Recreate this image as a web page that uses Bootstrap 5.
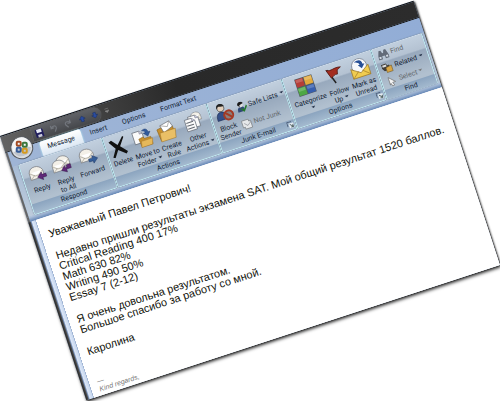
<!DOCTYPE html>
<html lang="ru">
<head>
<meta charset="utf-8">
<meta name="viewport" content="width=device-width, initial-scale=1">
<title>Message</title>
<link rel="stylesheet" href="https://cdn.jsdelivr.net/npm/bootstrap@5.3.0/dist/css/bootstrap.min.css">
<style>
body{background:#fff;overflow:hidden;font-family:Roboto,"Open Sans",sans-serif;font-size:7px;line-height:8px;color:#0f1a30}
.mail-window{width:87%;margin:136px 0 0 0;transform:rotate(-18.1deg);transform-origin:0 0;background:#93add2;border-top:1px solid #111;box-shadow:1px 1px 2px #222,0 3px 3px rgba(0,0,0,.5)}
button,.tab-link{border:0;background:none;padding:0;color:inherit;font:inherit;text-decoration:none}
.title-strip{height:17px;background:linear-gradient(90deg,#626262,#454545 20%,#292929 42%,#2c2c2c);border-bottom:1px solid #171717;padding-left:31px}
.quick-bar{height:14px;width:72px;background:linear-gradient(#606267,#45474b);border-radius:0 8px 8px 0;box-shadow:0 0 1px #999}
.quick-bar button,.more-btn{line-height:0}
.office-btn{left:5px;top:5px;line-height:0;z-index:2}
.tab-strip{height:15px;padding-left:33px;background:linear-gradient(90deg,#9fb5d6,#92add6)}
.tab-link{display:block;height:15px;line-height:15px;padding:0 7px}
.tab-link.active{background:linear-gradient(#fff,#dce8f4);border-radius:3px 3px 0 0;box-shadow:0 0 2px #b6fbff}
.tab-list{gap:2px}
.ribbon-bar{height:53px;padding:0 2px 0 6px;background:linear-gradient(#a8bcd5,#bccbdb)}
.left-edge{border-left:2px solid #666}
.tool-group{flex-basis:0;min-width:0;border:1px solid #bfeef3;border-top-color:#cfdbe8;box-shadow:0 0 1px #567;border-radius:2px;background:linear-gradient(#c1cfde 0,#b4c2d2 27%,#98a9bd 30%,#b1c0cf 76%)}
.g-respond{flex-grow:88}.g-actions{flex-grow:111}.g-junk{flex-grow:79}.g-options{flex-grow:94}.g-find{flex-grow:53}
.group-name{height:11px;line-height:10px;background:linear-gradient(#8ba4bf,#a4bacf)}
.launch{right:1px;top:1px;line-height:0}
.big-tool{white-space:nowrap}
.big-tool svg{display:block;width:20px;height:20px;margin:3px auto 2px}
.small-tool{height:14px;gap:2px;white-space:nowrap}
.small-tool svg{flex:none;width:11px;height:11px}
.safe-tools{padding-top:6px;gap:4px}
.dim{color:#606467}
.drop{display:inline-block;width:0;height:0;border:2px solid transparent;border-top-color:#26334a;border-bottom:0;vertical-align:2px;margin-left:2px}
.dim .drop{border-top-color:#777}
.under-strip{height:5px;background:linear-gradient(#b7c8df,#6284b4)}
.paper-row{background:linear-gradient(90deg,#222 0,#4a4a4a 2px,#7790b8 3px,#dbe6f7 4px,#c8d8ef 7px,#6f8bb8 8px,#fff 8px);padding-left:8px}
.paper{background:#fff;color:#10120a;font-family:"Liberation Sans",Arial,sans-serif;font-size:11px;line-height:11px;padding:12px 4px 2px 8px;white-space:nowrap}
.paper p{margin:0 0 12px}
.paper .sign-off{font:italic 7px/8px "Liberation Sans",sans-serif;color:#777;margin:22px 0 0}
</style>
<script src="https://cdn.jsdelivr.net/npm/bootstrap@5.3.0/dist/js/bootstrap.bundle.min.js"></script>
</head>
<body>
<svg class="d-none">
<defs>
<linearGradient id="gold" x2="0" y2="1"><stop stop-color="#f8dc91"/><stop offset="1" stop-color="#c98f28"/></linearGradient>
<linearGradient id="cream" x2="0" y2="1"><stop stop-color="#fff"/><stop offset="1" stop-color="#d8d3c5"/></linearGradient>
</defs>
<symbol id="letter" viewBox="0 0 16 14"><path d="M1 6C2 2 5 1 8 1s6 2 7 5v7H1z" fill="#f3f0e8" stroke="#777a80" stroke-width=".7"/><path d="M1 6l5 4h4l5-4M1 13l5-4M15 13l-5-4" fill="none" stroke="#a09b8d" stroke-width=".6"/><path d="M3 6h10l-3 3H6z" fill="#fff"/></symbol>
<symbol id="folder" viewBox="0 0 16 12"><path d="M1 2l5-1 1 2h7v8H2z" fill="#c7902d" stroke="#8d6420" stroke-width=".6"/><path d="M3 5h12.500l-2 6.500H1.500z" fill="#e5b85a" stroke="#a1752a" stroke-width=".5"/></symbol>
<symbol id="sheet" viewBox="0 0 12 14"><path d="M1 1h7l3 3v9H1z" fill="#fafafa" stroke="#656b76" stroke-width=".7"/><path d="M8 1v3h3" fill="#ccd" stroke="#778" stroke-width=".5"/></symbol>
</svg>

<main class="mail-window position-relative">
  <button class="office-btn position-absolute" type="button" aria-label="Office">
    <svg width="24" height="24" viewBox="0 0 24 24"><circle cx="12" cy="12" r="11" fill="#d9dce0" stroke="#55585d"/><circle cx="12" cy="11" r="9.500" fill="#f4f5f6"/><path d="M3 14c5-3 12-3 18 0a9.500 9.500 0 0 1-18 0" fill="#bfc4cb"/><g fill="none" stroke-width="2" transform="rotate(18 12 12)"><rect x="7" y="6" width="4" height="4" rx="1" stroke="#a34b23"/><rect x="13" y="7" width="4" height="4" rx="1" stroke="#3b763c"/><rect x="7" y="12" width="4" height="4" rx="1" stroke="#355b98"/><rect x="13" y="13" width="4" height="4" rx="1" stroke="#d59a20"/></g></svg>
  </button>
  <header class="title-strip d-flex align-items-center gap-1">
    <div class="quick-bar d-flex align-items-center justify-content-around">
      <button type="button" aria-label="Save"><svg width="9" height="9" viewBox="0 0 9 9"><path d="M.5.5h7l1 1v7h-8z" fill="#1f1d5d"/><path d="M2 .5h5v3.500H2z" fill="#e6eaf5"/><path d="M2.500 6h4v2.500h-4z" fill="#c8c9da"/></svg></button>
      <button type="button" aria-label="Undo"><svg width="9" height="9" viewBox="0 0 9 9"><path d="M2 1v3h3M2 4c2-3 6-2 5 1L5 8" fill="none" stroke="#72767d" stroke-width="1.200"/></svg></button>
      <button type="button" aria-label="Redo"><svg width="9" height="9" viewBox="0 0 9 9"><path d="M7 1v3H4M7 4C5 1 1 2 2 5l2 3" fill="none" stroke="#72767d" stroke-width="1.200"/></svg></button>
      <button type="button" aria-label="Previous"><svg width="7" height="7" viewBox="0 0 8 8"><path d="M4 .5l3.500 3.500h-2v3h-3V4h-2z" fill="#2a4ca0" stroke="#172c65" stroke-width=".5"/></svg></button>
      <button type="button" aria-label="Next"><svg width="7" height="7" viewBox="0 0 8 8"><path d="M4 7.500L.5 4h2V1h3v3h2z" fill="#2a4ca0" stroke="#172c65" stroke-width=".5"/></svg></button>
    </div>
    <button class="more-btn" type="button" aria-label="More"><svg width="5" height="6" viewBox="0 0 5 6"><path d="M.5 1h4M.5 3h4l-2 2z" fill="#888" stroke="#888" stroke-width=".5"/></svg></button>
  </header>
  <nav class="tab-strip left-edge d-flex">
    <div class="tab-list d-flex">
      <a class="tab-link active" href="#">Message</a>
      <a class="tab-link" href="#">Insert</a>
      <a class="tab-link" href="#">Options</a>
      <a class="tab-link" href="#">Format Text</a>
    </div>
  </nav>
  <div class="ribbon-bar left-edge d-flex">
    <section class="tool-group g-respond d-flex flex-column">
      <div class="flex-fill d-flex align-items-start justify-content-evenly">
        <button class="big-tool" type="button"><svg viewBox="0 0 20 20"><use href="#letter" x="1" y="2" width="16" height="14"/><path d="M9 14l5-4v2.500h4v3h-4V18z" fill="#5f2878" stroke="#39174c" stroke-width=".5"/></svg>Reply</button>
        <button class="big-tool" type="button"><svg viewBox="0 0 20 20"><use href="#letter" x="5" y="0" width="15" height="13"/><use href="#letter" x="0" y="3" width="15" height="13"/><path d="M9 15l4-4v2.500h2V11h4v4h-5v3z" fill="#5f2878" stroke="#39174c" stroke-width=".5"/></svg>Reply<br>to All</button>
        <button class="big-tool" type="button"><svg viewBox="0 0 20 20"><use href="#letter" x="1" y="1" width="16" height="14"/><path d="M19 14l-5-4v2.500h-4v3h4V18z" fill="#355e98" stroke="#203a6a" stroke-width=".5"/></svg>Forward</button>
      </div>
      <div class="group-name text-center">Respond</div>
    </section>
    <section class="tool-group g-actions d-flex flex-column">
      <div class="flex-fill d-flex align-items-start justify-content-evenly">
        <button class="big-tool" type="button"><svg viewBox="0 0 20 20"><path d="M2 3l3-1 5 6 7-7 1 1-6 8 6 7-2 2-7-6-5 7-2-1 5-8z" fill="#111"/></svg>Delete</button>
        <button class="big-tool" type="button"><svg viewBox="0 0 20 20"><use href="#sheet" x="0" y="0" width="12" height="15"/><use href="#folder" x="5" y="7" width="15" height="12"/><path d="M11 2c4-2 6 0 6 3h2l-3.500 4L12 5h2c0-2-1-2-3-3z" fill="#315b9d" stroke="#1a3568" stroke-width=".4"/></svg>Move to<br>Folder<span class="drop"></span></button>
        <button class="big-tool" type="button"><svg viewBox="0 0 20 20"><path d="M1 6l6-1 2 2h8v11H2z" fill="#c7902d" stroke="#8d6420" stroke-width=".6"/><path d="M5 3l10-2 2 6-10 4z" fill="#fff" stroke="#70747b" stroke-width=".7"/><path d="M5 3l7 3 3-5" fill="none" stroke="#888" stroke-width=".6"/><path d="M3 10h16l-2 9H2z" fill="#e9bf66" stroke="#a1752a" stroke-width=".5"/></svg>Create<br>Rule</button>
        <button class="big-tool" type="button"><svg viewBox="0 0 20 20"><use href="#letter" x="8" y="0" width="12" height="10"/><use href="#sheet" x="5" y="2" width="12" height="15"/><use href="#sheet" x="1" y="4" width="12" height="15"/><path d="M3 9h7M3 12h7M3 15h7" stroke="#656a72"/></svg>Other<br>Actions<span class="drop"></span></button>
      </div>
      <div class="group-name text-center">Actions</div>
    </section>
    <section class="tool-group g-junk d-flex flex-column">
      <div class="flex-fill d-flex align-items-start justify-content-evenly">
        <button class="big-tool" type="button"><svg viewBox="0 0 20 20"><path d="M2 17c0-6 2-8 5-8s5 2 5 8z" fill="#354f87" stroke="#1b2b54" stroke-width=".6"/><circle cx="8" cy="5" r="3.500" fill="#e3d0bd" stroke="#333" stroke-width=".6"/><path d="M4 5c0-6 7-5 8-1-3 0-5-1-6-1z" fill="#222"/><circle cx="14" cy="14" r="4.500" fill="#8b7f7d" stroke="#a43925" stroke-width="2"/><path d="M11 11l6 6" stroke="#a43925" stroke-width="2"/></svg>Block<br>Sender</button>
        <div class="safe-tools d-flex flex-column">
          <button class="small-tool d-flex align-items-center" type="button"><svg viewBox="0 0 11 11"><path d="M1 10c0-4 1-5 4-5s3 1 3 5z" fill="#304875"/><circle cx="5" cy="3" r="2.500" fill="#ddd"/><path d="M2 3c0-4 5-4 6-1L4 3v2z" fill="#181818"/><path d="M5 7l2 3 4-5" fill="none" stroke="#237a2a" stroke-width="1.500"/></svg><span>Safe Lists<span class="drop"></span></span></button>
          <button class="small-tool dim d-flex align-items-center" type="button"><svg viewBox="0 0 11 11"><path d="M1 1h7v2h2v7H3V8H1z" fill="#e6e8ea" stroke="#85898e" stroke-width=".8"/><path d="M3 4l3 3 4-3" fill="none" stroke="#85898e" stroke-width=".6"/></svg><span>Not Junk</span></button>
        </div>
      </div>
      <div class="group-name text-center position-relative">Junk E-mail<button class="launch position-absolute" type="button" aria-label="Junk options"><svg width="7" height="7" viewBox="0 0 7 7"><path d="M.5 5V.5H5" fill="none" stroke="#50617b"/><path d="M2 2h5v5H2z" fill="#e6eef5"/><path d="M3 3l3 3M6 3.500V6H3.500" fill="none" stroke="#566"/></svg></button></div>
    </section>
    <section class="tool-group g-options d-flex flex-column">
      <div class="flex-fill d-flex align-items-start justify-content-evenly">
        <button class="big-tool" type="button"><svg viewBox="0 0 20 20"><path d="M1 1h18v18H1z" fill="#525a62"/><path d="M1.500 1.500h8v8h-8z" fill="#b63d36"/><path d="M10.500 1.500h8v8h-8z" fill="#e3aa3d"/><path d="M1.500 10.500h8v8h-8z" fill="#4da744"/><path d="M10.500 10.500h8v8h-8z" fill="#365eae"/><path d="M2 2h7v3H2zM11 2h7v3h-7zM2 11h7v3H2zM11 11h7v3h-7z" fill="#fff" opacity=".2"/></svg>Categorize<br><span class="drop"></span></button>
        <button class="big-tool" type="button"><svg viewBox="0 0 20 20"><path d="M4 2l5 15" stroke="#222" stroke-width="1.500"/><path d="M3 2c5 3 8-1 15 1l-4 2-1 4c-3-1-4 1-7 2z" fill="#a32c20" stroke="#4f1712" stroke-width=".7"/></svg>Follow<br>Up<span class="drop"></span></button>
        <button class="big-tool" type="button"><svg viewBox="0 0 20 20"><circle cx="10" cy="8" r="7.500" fill="#f6f8fa" stroke="#727b8a" stroke-width=".7"/><path d="M1 9l9 6 9-6v10H1z" fill="#f0cc50" stroke="#9d7926" stroke-width=".7"/><path d="M1 19l7-6M19 19l-7-6" stroke="#a9822b" stroke-width=".7"/><path d="M6 3c6-2 8 0 8 4h2l-4 4-3-4h2c0-2-2-3-5-4z" fill="#264f96"/></svg>Mark as<br>Unread</button>
      </div>
      <div class="group-name text-center position-relative">Options<button class="launch position-absolute" type="button" aria-label="Message options"><svg width="7" height="7" viewBox="0 0 7 7"><path d="M.5 5V.5H5" fill="none" stroke="#50617b"/><path d="M2 2h5v5H2z" fill="#e6eef5"/><path d="M3 3l3 3M6 3.500V6H3.500" fill="none" stroke="#566"/></svg></button></div>
    </section>
    <section class="tool-group g-find d-flex flex-column">
      <div class="flex-fill d-flex flex-column ps-1">
        <button class="small-tool dim d-flex align-items-center" type="button"><svg viewBox="0 0 11 11"><path d="M2 1h2l1 3h1l1-3h2l2 6v3H7V7H4v3H0V7z" fill="#626b79"/><path d="M1 7h2v2H1zM8 7h2v2H8z" fill="#d5dce5"/></svg><span>Find</span></button>
        <button class="small-tool d-flex align-items-center" type="button"><svg viewBox="0 0 11 11"><path d="M0 1h5l1 2h2v5H2L0 5z" fill="#3f3d3a"/><path d="M1 2h4v2H1z" fill="#ddd"/><path d="M4 5l6-1v6H4z" fill="#d8a545" stroke="#68501f" stroke-width=".5"/></svg><span>Related<span class="drop"></span></span></button>
        <button class="small-tool dim d-flex align-items-center" type="button"><svg viewBox="0 0 11 11"><path d="M3 1l6 6H6l1 3-2 .5L4 7.500 3 9z" fill="#f3f3f3" stroke="#777" stroke-width=".7"/></svg><span>Select<span class="drop"></span></span></button>
      </div>
      <div class="group-name text-center">Find</div>
    </section>
  </div>
  <div class="under-strip left-edge"></div>
  <div class="paper-row">
    <article class="paper">
      <p>Уважаемый Павел Петрович!</p>
      <p>Недавно пришли результаты экзамена SAT. Мой общий результат 1520 баллов.<br>Critical Reading 400 17%<br>Math 630 82%<br>Writing 490 50%<br>Essay 7 (2-12)</p>
      <p>Я очень довольна результатом.<br>Большое спасибо за работу со мной.</p>
      <p>Каролина</p>
      <p class="sign-off">—<br>Kind regards,</p>
    </article>
  </div>
</main>
</body>
</html>
